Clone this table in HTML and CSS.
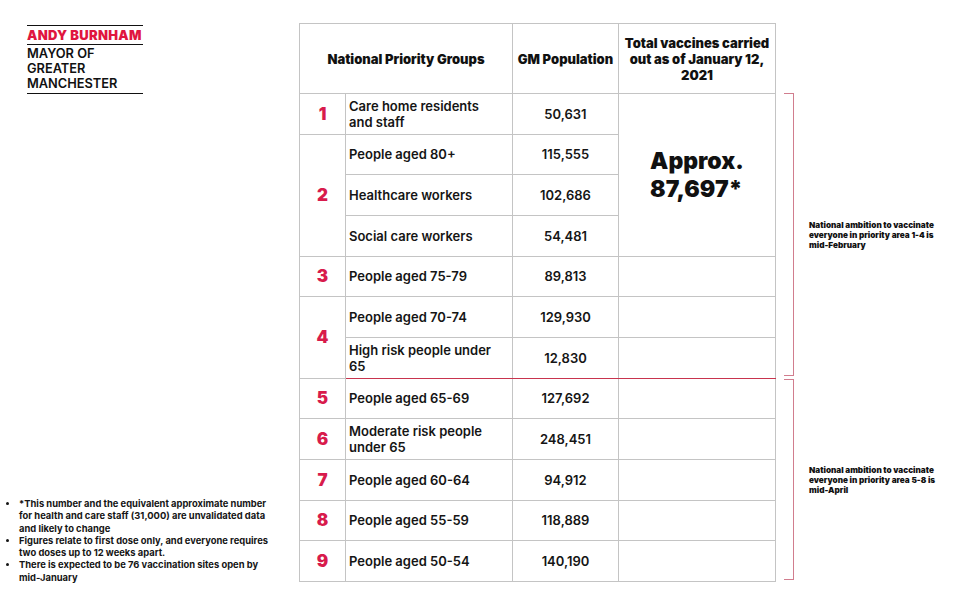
FILE: index.html
```html
<!DOCTYPE html>
<html lang="en">
<head>
<meta charset="utf-8">
<title>GM vaccination priority groups</title>
<link rel="stylesheet" href="styles.css">
</head>
<body>
<div class="page">
  <aside class="side">
    <div class="logo">
      <div class="logo-name">ANDY BURNHAM</div>
      <div class="logo-title">MAYOR OF<br>GREATER<br>MANCHESTER</div>
    </div>
    <ul class="notes">
      <li>*This number and the equivalent approximate number for health and care staff (31,000) are unvalidated data and likely to change</li>
      <li>Figures relate to first dose only, and everyone requires two doses up to 12 weeks apart.</li>
      <li>There is expected to be 76 vaccination sites open by mid-January</li>
    </ul>
  </aside>

  <table class="grid">
    <colgroup>
      <col class="c-num"><col class="c-group"><col class="c-pop"><col class="c-total">
    </colgroup>
    <thead>
      <tr class="head">
        <th colspan="2">National Priority Groups</th>
        <th>GM Population</th>
        <th>Total vaccines carried<br>out as of January 12,<br>2021</th>
      </tr>
    </thead>
    <tbody>
      <tr><td class="num">1</td><td class="grp">Care home residents<br>and staff</td><td class="pop">50,631</td><td class="total" rowspan="4"><span class="approx">Approx.<br>87,697*</span></td></tr>
      <tr><td class="num" rowspan="3">2</td><td class="grp">People aged 80+</td><td class="pop">115,555</td></tr>
      <tr><td class="grp">Healthcare workers</td><td class="pop">102,686</td></tr>
      <tr><td class="grp">Social care workers</td><td class="pop">54,481</td></tr>
      <tr><td class="num">3</td><td class="grp">People aged 75-79</td><td class="pop">89,813</td><td></td></tr>
      <tr><td class="num" rowspan="2">4</td><td class="grp">People aged 70-74</td><td class="pop">129,930</td><td></td></tr>
      <tr class="split"><td class="grp">High risk people under<br>65</td><td class="pop">12,830</td><td></td></tr>
      <tr><td class="num">5</td><td class="grp">People aged 65-69</td><td class="pop">127,692</td><td></td></tr>
      <tr><td class="num">6</td><td class="grp">Moderate risk people<br>under 65</td><td class="pop">248,451</td><td></td></tr>
      <tr><td class="num">7</td><td class="grp">People aged 60-64</td><td class="pop">94,912</td><td></td></tr>
      <tr><td class="num">8</td><td class="grp">People aged 55-59</td><td class="pop">118,889</td><td></td></tr>
      <tr><td class="num">9</td><td class="grp">People aged 50-54</td><td class="pop">140,190</td><td></td></tr>
    </tbody>
  </table>

  <div class="brackets">
    <div class="bgroup b1">
      <div class="bracket"></div>
      <p class="btext">National ambition to vaccinate everyone in priority area 1-4 is mid-February</p>
    </div>
    <div class="bgroup b2">
      <div class="bracket"></div>
      <p class="btext">National ambition to vaccinate everyone in priority area 5-8 is mid-April</p>
    </div>
  </div>
</div>
</body>
</html>
```

FILE: styles.css
```css
* { box-sizing: border-box; }

html, body {
  margin: 0;
  padding: 0;
  background: #ffffff;
}

body {
  font-family: Inter, "Liberation Sans", Arial, sans-serif;
  color: #111111;
  width: 961px;
  height: 595px;
  overflow: hidden;
}

.page {
  display: flex;
  height: 595px;
}

/* ---------- left column ---------- */
.side {
  width: 299px;
  flex: none;
  display: flex;
  flex-direction: column;
  justify-content: space-between;
  padding: 25px 0 11px 0;
}

.logo {
  margin-left: 27px;
  width: 116px;
  border-top: 1.5px solid #111;
  border-bottom: 1.5px solid #111;
}

.logo-name {
  color: #e0163f;
  font-weight: 900;
  font-size: 13px;
  line-height: 17px;
  letter-spacing: 0.3px;
  white-space: nowrap;
  border-bottom: 1.5px solid #111;
  padding-top: 1px;
}

.logo-title {
  font-weight: 600;
  font-size: 12.8px;
  line-height: 15px;
  padding: 1px 0 2px 0;
}

.notes {
  margin: 0;
  width: 278px;
  padding: 0 0 0 19px;
  font-size: 9.4px;
  font-weight: 700;
  line-height: 12.3px;
  color: #151515;
}

.notes li::marker {
  font-size: 9px;
}

/* ---------- table ---------- */
.grid {
  margin-top: 23px;
  width: 476px;
  height: 558px;
  border-collapse: collapse;
  table-layout: fixed;
  flex: none;
  border: 1.5px solid #bdbdbd;
}

.c-num { width: 46px; }
.c-group { width: 167px; }
.c-pop { width: 106px; }
.c-total { width: 157px; }

.grid th,
.grid td {
  border: 1px solid #c4c4c4;
  padding: 0;
  vertical-align: middle;
}

.head {
  height: 70px;
}

.grid th {
  font-weight: 900;
  font-size: 13px;
  line-height: 16px;
  text-align: center;
  color: #111;
}

.grid tbody tr {
  height: 40.67px;
}

.num {
  color: #d81b4c;
  font-weight: 900;
  font-size: 17px;
  text-align: center;
}

.grp {
  font-weight: 600;
  font-size: 13px;
  line-height: 16px;
  padding: 0 4px 0 3px !important;
  color: #151515;
}

.pop {
  font-weight: 600;
  font-size: 13px;
  text-align: center;
  color: #151515;
}

.total {
  vertical-align: top !important;
  text-align: center;
  padding-top: 53px !important;
}

.approx {
  display: inline-block;
  font-weight: 900;
  font-size: 23px;
  line-height: 28px;
  text-align: left;
  color: #111;
}

.grid tr.split td {
  border-bottom: 1.5px solid #c8344e;
}

/* ---------- right brackets ---------- */
.brackets {
  flex: 1;
  display: flex;
  flex-direction: column;
  padding-top: 93px;
  padding-left: 8px;
}

.bgroup {
  display: flex;
  align-items: center;
}

.b1 { height: 283px; }
.b2 { height: 201px; margin-top: 3px; }

.bracket {
  width: 10px;
  height: 100%;
  flex: none;
  border: 1.5px solid #d17d8e;
  border-left: none;
}

.btext {
  margin: 0 0 0 15px;
  width: 136px;
  font-size: 8.2px;
  font-weight: 900;
  line-height: 10px;
  color: #111;
}
```
